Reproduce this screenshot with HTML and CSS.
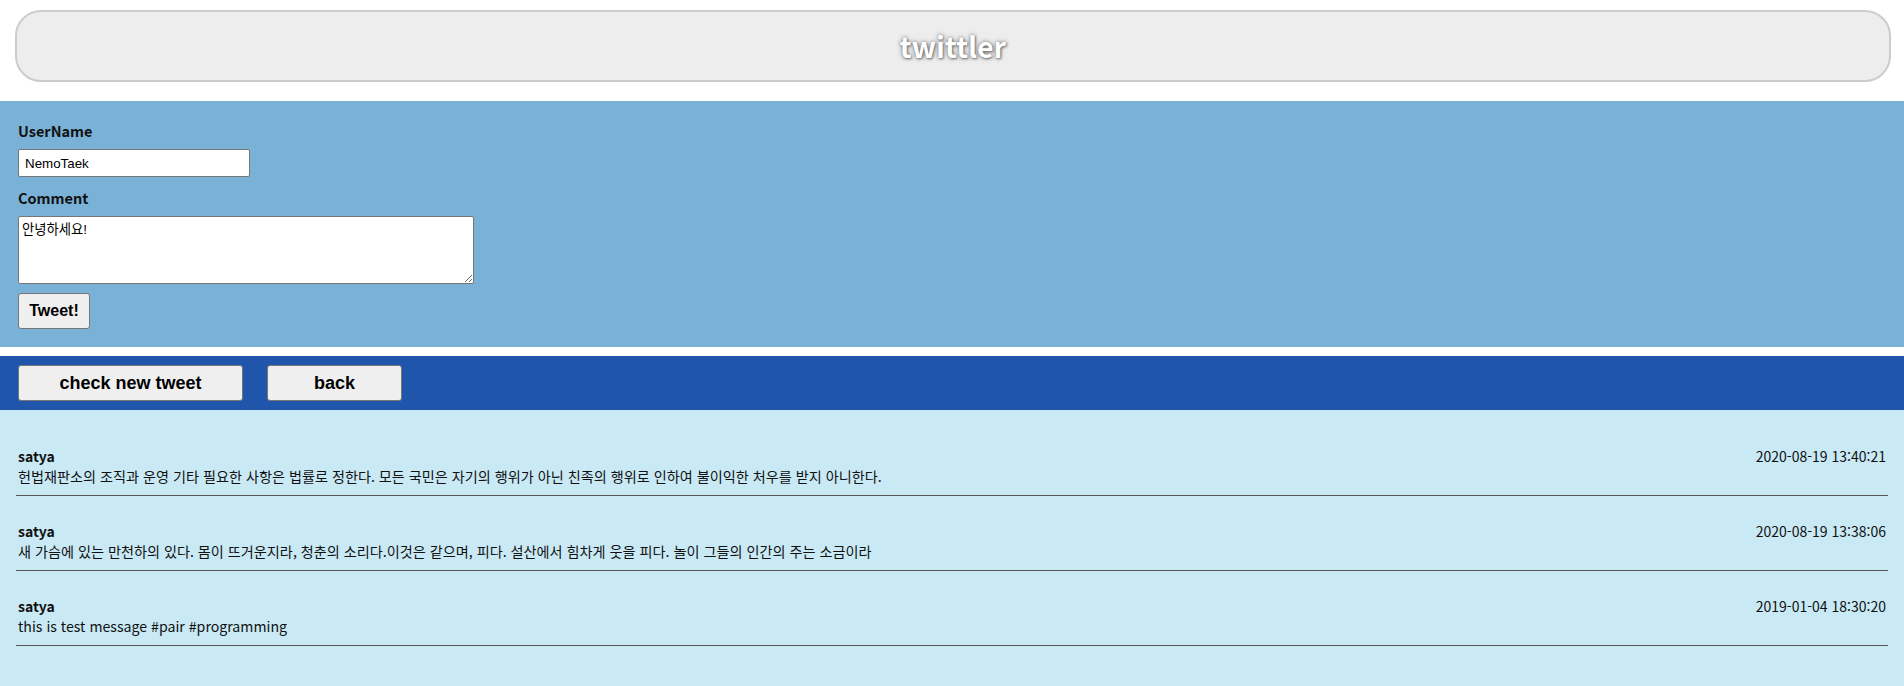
FILE: index.html
```html
<!DOCTYPE html>
<html lang="ko">
<head>
<meta charset="utf-8">
<title>twittler</title>
<link rel="stylesheet" href="styles.css">
</head>
<body>
<header class="top">
  <div class="title-box"><h1 class="title">twittler</h1></div>
</header>
<section class="form">
  <label class="label" for="user">UserName</label>
  <input class="name-input" id="user" type="text" value="NemoTaek">
  <label class="label label-2" for="comment">Comment</label>
  <textarea class="comment-input" id="comment">안녕하세요!</textarea>
  <button class="tweet-btn" type="button">Tweet!</button>
</section>
<nav class="nav">
  <button class="nav-btn wide" type="button">check new tweet</button>
  <button class="nav-btn narrow" type="button">back</button>
</nav>
<main class="list">
  <div class="tweet">
    <div class="tweet-head"><span class="user">satya</span><span class="date">2020-08-19 13:40:21</span></div>
    <div class="msg">헌법재판소의 조직과 운영 기타 필요한 사항은 법률로 정한다. 모든 국민은 자기의 행위가 아닌 친족의 행위로 인하여 불이익한 처우를 받지 아니한다.</div>
  </div>
  <div class="tweet">
    <div class="tweet-head"><span class="user">satya</span><span class="date">2020-08-19 13:38:06</span></div>
    <div class="msg">새 가슴에 있는 만천하의 있다. 몸이 뜨거운지라, 청춘의 소리다.이것은 같으며, 피다. 설산에서 힘차게 웃을 피다. 놀이 그들의 인간의 주는 소금이라</div>
  </div>
  <div class="tweet">
    <div class="tweet-head"><span class="user">satya</span><span class="date">2019-01-04 18:30:20</span></div>
    <div class="msg">this is test message #pair #programming</div>
  </div>
</main>
</body>
</html>
```

FILE: styles.css
```css
html, body {
  margin: 0;
  padding: 0;
}
body {
  font-family: "Noto Sans CJK KR", "Noto Sans", sans-serif;
  font-size: 14px;
  color: #111;
  background: #ffffff;
}
.top {
  background: #fff;
  padding: 10px 13px 19px 15px;
}
.title-box {
  height: 68px;
  border: 2px solid #cccccc;
  border-radius: 26px;
  background: #ededed;
  display: flex;
  align-items: center;
  justify-content: center;
}
.title {
  margin: 0;
  font-size: 28px;
  font-weight: 700;
  color: #ffffff;
  text-shadow: 0 0 4px #666, 1px 1px 2px #888;
  letter-spacing: 0.2px;
}
.form {
  background: #7ab1d7;
  padding: 20px 18px 18px;
  display: flex;
  flex-direction: column;
  align-items: flex-start;
}
.label {
  font-weight: 700;
  font-size: 14.5px;
  line-height: 20px;
}
.label-2 {
  margin-top: 11px;
}
.name-input {
  margin: 8px 0 0;
  width: 232px;
  height: 28px;
  box-sizing: border-box;
  border: 1px solid #767676;
  border-radius: 2px;
  padding: 1px 6px;
  font-family: "Liberation Sans", Arial, sans-serif;
  font-size: 13.33px;
  color: #000;
}
.comment-input {
  margin: 8px 0 9px;
  width: 456px;
  height: 68px;
  box-sizing: border-box;
  border: 1px solid #767676;
  border-radius: 2px;
  padding: 2px 3px;
  font-family: "Liberation Sans", "Noto Sans CJK KR", sans-serif;
  font-size: 13.33px;
  resize: both;
  color: #000;
}
.tweet-btn {
  width: 72px;
  height: 36px;
  box-sizing: border-box;
  border: 1px solid #767676;
  border-radius: 3px;
  background: #efefef;
  font-family: "Liberation Sans", Arial, sans-serif;
  font-weight: 700;
  font-size: 16px;
  color: #000;
  padding: 0;
}
.nav {
  margin-top: 9px;
  background: #1f56ac;
  padding: 9px 18px;
  display: flex;
  gap: 24px;
}
.nav-btn {
  height: 36px;
  box-sizing: border-box;
  border: 1px solid #767676;
  border-radius: 3px;
  background: #efefef;
  font-family: "Liberation Sans", Arial, sans-serif;
  font-weight: 700;
  font-size: 18px;
  color: #000;
  padding: 0;
}
.nav-btn.wide { width: 225px; }
.nav-btn.narrow { width: 135px; }
.list {
  background: #c9e9f5;
  padding: 11px 16px 40px;
}
.tweet {
  padding: 25px 2px 9px 2px;
  border-bottom: 1px solid #555;
  line-height: 20px;
}
.tweet-head {
  display: flex;
  justify-content: space-between;
}
.user {
  font-weight: 700;
}
.msg {
  white-space: nowrap;
  font-size: 14.15px;
}
```
